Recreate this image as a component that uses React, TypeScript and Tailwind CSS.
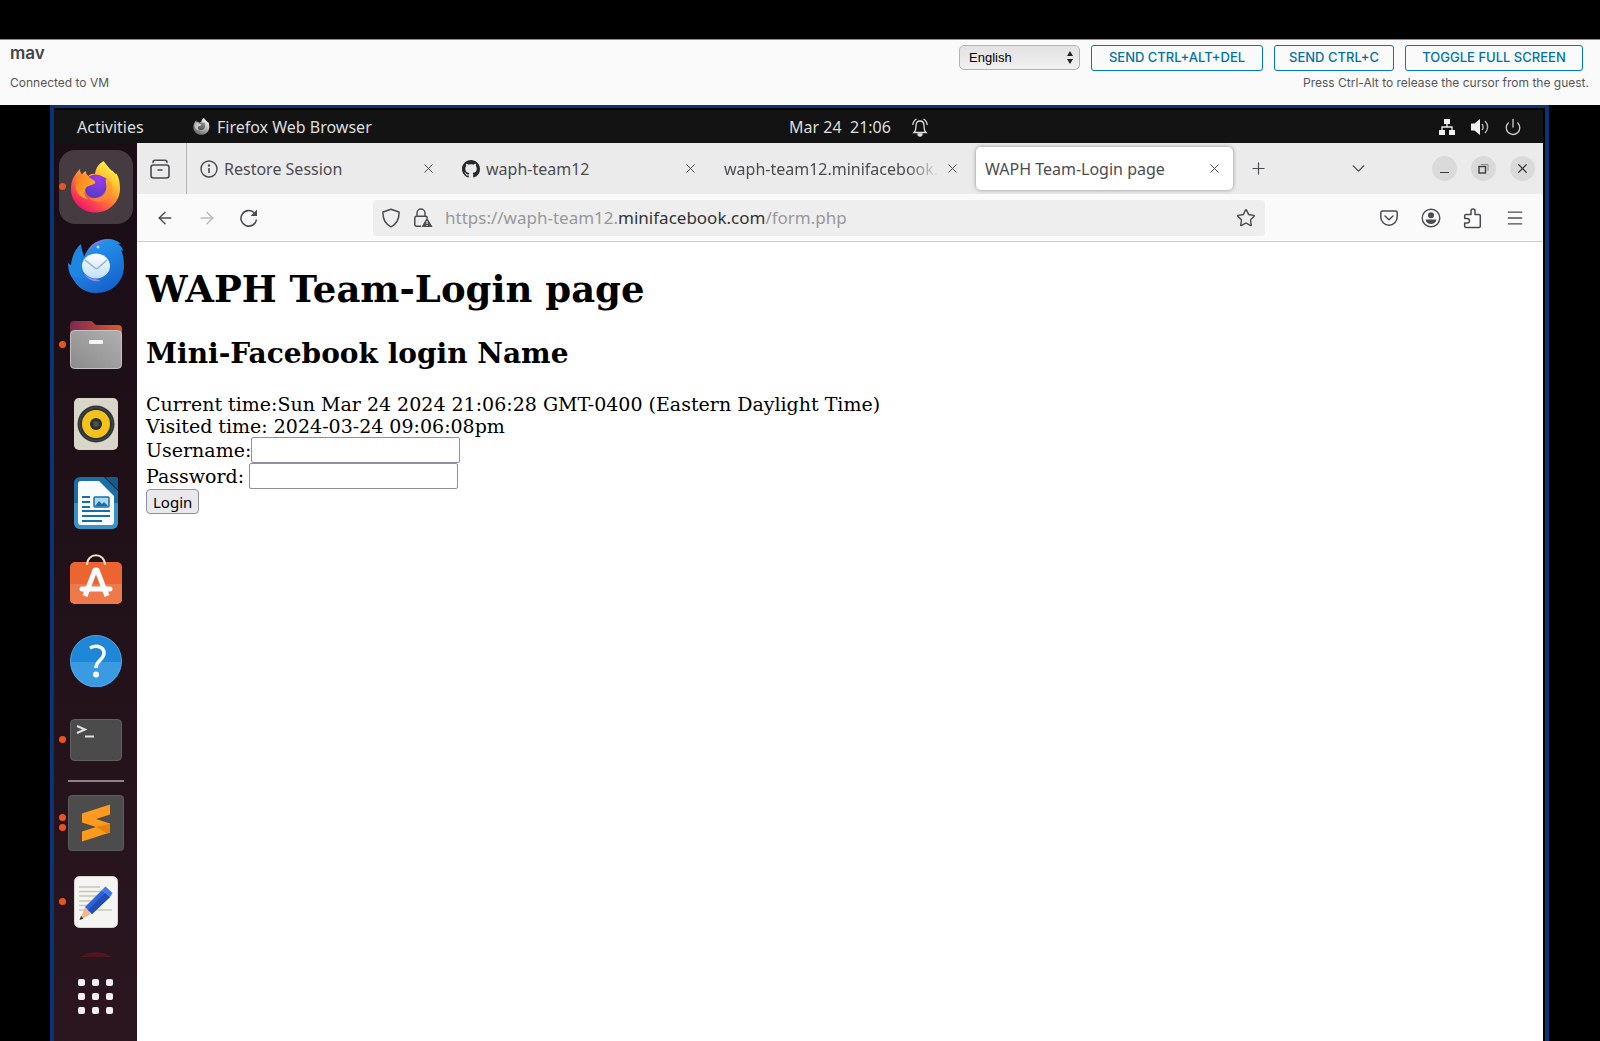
import React from "react";
import {
  ArrowLeft,
  ArrowRight,
  ChevronDown,
  Menu,
  Plus,
  Power,
  Star,
  X,
} from "lucide-react";

const ui = "font-['Noto_Sans','Open_Sans',sans-serif]";

function FirefoxLogo({ className = "", mono = false }: { className?: string; mono?: boolean }) {
  const id = mono ? "ffm" : "ffc";
  return (
    <svg viewBox="0 0 50 52" className={className} aria-hidden="true">
      <defs>
        <linearGradient id={`${id}-body`} x1="0.85" y1="0.1" x2="0.25" y2="0.95">
          <stop offset="0" stopColor={mono ? "#f2f2f2" : "#fff24a"} />
          <stop offset="0.3" stopColor={mono ? "#cfcfcf" : "#ffbd2e"} />
          <stop offset="0.6" stopColor={mono ? "#9a9a9a" : "#ff7139"} />
          <stop offset="1" stopColor={mono ? "#6b6b6b" : "#f5156c"} />
        </linearGradient>
        <radialGradient id={`${id}-globe`} cx="0.6" cy="0.2" r="0.9">
          <stop offset="0" stopColor={mono ? "#8a8a8a" : "#a03be8"} />
          <stop offset="1" stopColor={mono ? "#4b4b4b" : "#4b3bc4"} />
        </radialGradient>
        <linearGradient id={`${id}-fox`} x1="0" y1="0" x2="1" y2="0.6">
          <stop offset="0" stopColor={mono ? "#b5b5b5" : "#ff7a1c"} />
          <stop offset="1" stopColor={mono ? "#d9d9d9" : "#ffb52b"} />
        </linearGradient>
      </defs>
      <path
        d="M9 8C4 13 0 19 0 28c0 13 11 23.500 24.500 23.500S49 41 49 27.500c0-6-1-11-3.500-15C44 14 43 10 40 9c-3-3-5-6-7.500-9C28 3 25 6 24 13c-3-.5-5 .5-6.500 2-2-1-2.500-3-2.500-5-2 1-3 2-4 3.500C9.500 12 9 10 9 8z"
        fill={`url(#${id}-body)`}
      />
      <path d="M14 23c1-7 7-11 14-9 4 1 5 3 8 3-2 1-1 3-1 5 2 11-4 15-11 15S13 32 14 23z" fill={`url(#${id}-globe)`} />
      <path
        d="M5 17c4-2 8-2 12-1 3 .6 5 3 7 4.500 1 2-2 3-5 4-3 1-5 2-5 5-2 4 1 8 4 9C7 37 2 28 5 17z"
        fill={`url(#${id}-fox)`}
      />
      <path d="M34 16c3 4 3 12-1 16-4 5-9 6-15 5 5 5 14 5 20 0 6-6 5-16-4-21z" fill={mono ? "#bdbdbd" : "#ff8f33"} opacity="0.6" />
    </svg>
  );
}

function ThunderbirdLogo() {
  return (
    <svg viewBox="0 0 56 54" className="h-[54px] w-[56px]" aria-hidden="true">
      <defs>
        <linearGradient id="tb-body" x1="0.2" y1="0" x2="0.7" y2="1">
          <stop offset="0" stopColor="#2a9bf0" />
          <stop offset="0.5" stopColor="#1f7fe0" />
          <stop offset="1" stopColor="#1560c8" />
        </linearGradient>
        <linearGradient id="tb-env" x1="0" y1="0" x2="0" y2="1">
          <stop offset="0" stopColor="#ffffff" />
          <stop offset="1" stopColor="#bfe0fb" />
        </linearGradient>
      </defs>
      <path d="M13 5c0 6 3 9 3 14v22L8 43C2 38 0 31 0 24l3 2C4 17 7 10 13 5z" fill="#1d86e2" />
      <path
        d="M20 11C25 4 32 0 39 0c6 0 11 2 14 5h-3c3 2 5 4 5 7l-2-1c2 4 3 9 3 16 0 16-12 27-28 27C15 54 6 46 3 34c4 4 7 5 10 4C11 28 15 18 20 11z"
        fill="url(#tb-body)"
      />
      <path d="M18 14C23 4 31 .500 40 .500c-3 .5-6 1.500-8 3.500-5 2-10 5-14 10z" fill="#7d78e6" />
      <ellipse cx="28" cy="27" rx="14" ry="12.500" fill="url(#tb-env)" />
      <path d="m17 21 10 8c1 .8 2 .8 3 0l9-8" fill="none" stroke="#8cb2dd" strokeWidth="1.500" />
      <path d="M16 35c5 5 10 4 17 7-5 1-13 0-17-7z" fill="#8f86ef" />
      <circle cx="30" cy="8" r="1.500" fill="#a8e4ff" />
    </svg>
  );
}

function FilesLogo() {
  return (
    <svg viewBox="0 0 52 48" className="h-[48px] w-[52px]" aria-hidden="true">
      <defs>
        <linearGradient id="fl-back">
          <stop offset="0" stopColor="#7b2a52" />
          <stop offset="1" stopColor="#e4572a" />
        </linearGradient>
        <linearGradient id="fl-front" x1="0" y1="1" x2="1" y2="0">
          <stop offset="0" stopColor="#8b8b8b" />
          <stop offset="1" stopColor="#b0b0b0" />
        </linearGradient>
      </defs>
      <path d="M4 0h17c2 0 3 4 6 4h21a4 4 0 0 1 4 4v14H0V4a4 4 0 0 1 4-4z" fill="url(#fl-back)" />
      <rect x="0.500" y="9.500" width="51" height="38" rx="4" fill="url(#fl-front)" stroke="#c2c2c2" />
      <rect x="19" y="19" width="14" height="4" rx="1" fill="#f4f4f4" />
    </svg>
  );
}

function RhythmboxLogo() {
  return (
    <svg viewBox="0 0 44 52" className="h-[52px] w-[44px]" aria-hidden="true">
      <rect width="44" height="52" rx="5" fill="#d9d5c9" />
      <circle cx="22" cy="26" r="18.500" fill="#2e3436" />
      <circle cx="22" cy="26" r="16.500" fill="none" stroke="#454b4d" />
      <circle cx="22" cy="26" r="14" fill="#f5c21d" />
      <circle cx="22" cy="26" r="6" fill="#2a2f31" />
      <circle cx="22" cy="26" r="3" fill="#4a5052" />
    </svg>
  );
}

function WriterLogo() {
  return (
    <svg viewBox="0 0 44 52" className="h-[52px] w-[44px]" aria-hidden="true">
      <path d="M6 0h24l14 14v32a6 6 0 0 1-6 6H6a6 6 0 0 1-6-6V6a6 6 0 0 1 6-6z" fill="#1c6da5" />
      <path d="M0 26h44v20a6 6 0 0 1-6 6H6a6 6 0 0 1-6-6z" fill="#3a92c5" />
      <path d="M31 0h11a2 2 0 0 1 2 2v11z" fill="#145a8c" />
      <path d="M7 4h18l15 15v26a3 3 0 0 1-3 3H7a3 3 0 0 1-3-3V7a3 3 0 0 1 3-3z" fill="#f8fbfd" />
      <path d="M8 20h8M8 25h8M8 30h8M8 34h28M8 39h28M8 44h20" stroke="#1c6da5" strokeWidth="2" />
      <rect x="20" y="20" width="15" height="10" rx="1" fill="#a9dcf5" stroke="#1c6da5" strokeWidth="1.500" />
      <path d="m21 29 4-5 3 3 2-2 4 4z" fill="#1c6da5" />
    </svg>
  );
}

function SoftwareLogo() {
  return (
    <svg viewBox="0 0 52 56" className="h-[56px] w-[52px]" aria-hidden="true">
      <rect y="8" width="52" height="42" rx="5" fill="#ec6430" />
      <path d="M0 30h52v15a5 5 0 0 1-5 5H5a5 5 0 0 1-5-5z" fill="#ee7a4b" />
      <path d="M17 11c0-13 18-13 18 0" fill="none" stroke="#f1d9c6" strokeWidth="2" />
      <path d="m15 42 10-26h2l10 26" fill="none" stroke="#fff" strokeWidth="5" strokeLinejoin="round" />
      <path d="M12 35h28" stroke="#fff" strokeWidth="5" strokeLinecap="round" />
    </svg>
  );
}

function HelpLogo() {
  return (
    <svg viewBox="0 0 52 52" className="h-[52px] w-[52px]" aria-hidden="true">
      <circle cx="26" cy="26" r="25.500" fill="#1f87d8" />
      <path d="M.500 27a25.500 25.500 0 0 0 51 0z" fill="#3a9be2" />
      <circle cx="26" cy="26" r="25.500" fill="none" stroke="#4fa6e2" />
      <path d="M20 13c8-4 14 0 14 5 0 7-8 7-8 15" fill="none" stroke="#fff" strokeWidth="3.500" />
      <circle cx="26" cy="39.500" r="3" fill="#fff" />
    </svg>
  );
}

function TerminalLogo() {
  return (
    <svg viewBox="0 0 52 42" className="h-[42px] w-[52px]" aria-hidden="true">
      <rect x="0.500" y="0.500" width="51" height="41" rx="4" fill="#4b4b4b" stroke="#606060" />
      <path d="m7 7 8 3.500L7 14" fill="none" stroke="#e2e2e2" strokeWidth="2" />
      <path d="M15 17.500h9" stroke="#e2e2e2" strokeWidth="2" />
    </svg>
  );
}

function SublimeLogo() {
  return (
    <svg viewBox="0 0 56 56" className="h-[56px] w-[56px]" aria-hidden="true">
      <rect x="0.500" y="0.500" width="55" height="55" rx="3" fill="#4b4c4b" stroke="#5a5b5a" />
      <path d="M14 18.500 42 9.500v10L28 24l14 4.500v9L14 46.500v-10L28 32l-14-4.500z" fill="#ff9a1f" />
      <path d="m28 32 14-3.500v9L39 38.500z" fill="#e6830c" />
    </svg>
  );
}

function EditorLogo() {
  return (
    <svg viewBox="0 0 44 52" className="h-[52px] w-[44px]" aria-hidden="true">
      <rect x="0.500" y="0.500" width="43" height="51" rx="5" fill="#f4f4f3" stroke="#d6d6d6" />
      <path d="M5 11h21M5 15.500h23M5 20h19M5 25h15M5 29.500h12M5 34h33" stroke="#c9c6b8" strokeWidth="1.500" />
      <path d="m11 31-5 13 11-6z" fill="#f0b98a" />
      <path d="m5.500 44 1.500-4 2.500 2.500z" fill="#333" />
      <path d="m11 31 17-17 8 7-18 17z" fill="#2f63d6" />
      <path d="m14 34 17-17 5 4-18 17z" fill="#1f4cb8" />
      <path d="m28 14 3.500-3.500 7 6.500-2.500 4z" fill="#3f78ee" />
    </svg>
  );
}

function DockItem({ label, dots = 0, active = false, children }: { label: string; dots?: number; active?: boolean; children: React.ReactNode }) {
  return (
    <button type="button" aria-label={label} className="relative flex h-[79px] w-full shrink-0 items-center justify-center">
      <span className={active ? "flex size-[74px] items-center justify-center rounded-2xl bg-[#463b41]" : "flex items-center justify-center"}>{children}</span>
      <span className="absolute inset-y-0 left-[5px] flex flex-col items-center justify-center gap-[3px]">
        {Array.from({ length: dots }, (_, i) => (
          <span key={i} className="size-[7px] rounded-full bg-[#e95420]" />
        ))}
      </span>
    </button>
  );
}

function Dock() {
  return (
    <nav aria-label="Dock" className="flex w-[83px] shrink-0 flex-col bg-linear-to-b from-[#1a0d15] via-[#211119] to-[#2b1620] pt-[4px]">
      <DockItem label="Firefox" dots={1} active>
        <FirefoxLogo className="h-[52px] w-[50px]" />
      </DockItem>
      <DockItem label="Thunderbird"><ThunderbirdLogo /></DockItem>
      <DockItem label="Files" dots={1}><FilesLogo /></DockItem>
      <DockItem label="Rhythmbox"><RhythmboxLogo /></DockItem>
      <DockItem label="Writer"><WriterLogo /></DockItem>
      <DockItem label="Software"><SoftwareLogo /></DockItem>
      <DockItem label="Help"><HelpLogo /></DockItem>
      <DockItem label="Terminal" dots={1}><TerminalLogo /></DockItem>
      <div className="mx-auto my-px h-0.5 w-[56px] shrink-0 bg-[#8c8287]" />
      <DockItem label="Sublime Text" dots={2}><SublimeLogo /></DockItem>
      <DockItem label="Text Editor" dots={1}><EditorLogo /></DockItem>
      <div className="flex h-4 shrink-0 items-end justify-center">
        <svg viewBox="0 0 32 5" className="h-[5px] w-8" aria-hidden="true">
          <path d="M0 5C9-1.500 23-1.500 32 5z" fill="#53161f" />
        </svg>
      </div>
      <button type="button" aria-label="Show Applications" className="mt-[22px] grid shrink-0 grid-cols-3 gap-[7px] self-center">
        {Array.from({ length: 9 }, (_, i) => (
          <span key={i} className="size-[7px] rounded-xs bg-[#f3eff1]" />
        ))}
      </button>
    </nav>
  );
}

function ConsoleButton({ width, children }: { width: string; children: React.ReactNode }) {
  return (
    <button type="button" className={`h-[26px] rounded-[3px] border border-[#0079b8] text-[13px] font-medium whitespace-nowrap text-[#0072a3] ${width}`}>
      {children}
    </button>
  );
}

function ConsoleHeader() {
  return (
    <header className="flex h-[66px] shrink-0 justify-between border-t border-[#8a8a8a] bg-[#fafafa] pr-[11px] pl-[10px] font-['Inter',sans-serif] text-[#565656]">
      <div>
        <h1 className="pt-[1px] text-[17px] leading-6 font-semibold text-[#454545]">mav</h1>
        <p className="pt-[10px] text-[12px] leading-4">Connected to VM</p>
      </div>
      <div className="flex flex-col items-end pt-[5px]">
        <div className="flex gap-[11px] pr-[6px]">
          <div className="relative w-[121px]">
            <select aria-label="Keyboard language" defaultValue="English" className="block h-[25px] w-full appearance-none rounded-[5px] border border-[#b4b4b4] bg-linear-to-b from-[#e2e2e2] to-[#f1f1f1] px-[9px] font-['Liberation_Sans',sans-serif] text-[13px] text-black">
              <option>English</option>
            </select>
            <svg viewBox="0 0 8 13" className="pointer-events-none absolute top-[6px] right-[6px] h-[13px] w-2" aria-hidden="true">
              <path d="m4 0 3 5H1zM4 13 1 8h6z" fill="#222" />
            </svg>
          </div>
          <ConsoleButton width="w-[172px]">SEND CTRL+ALT+DEL</ConsoleButton>
          <ConsoleButton width="w-[120px]">SEND CTRL+C</ConsoleButton>
          <ConsoleButton width="w-[178px]">TOGGLE FULL SCREEN</ConsoleButton>
        </div>
        <p className="pt-[4px] text-[12px] leading-4">Press Ctrl-Alt to release the cursor from the guest.</p>
      </div>
    </header>
  );
}

function SystemBar() {
  return (
    <div className={`grid h-[33px] shrink-0 grid-cols-[1fr_auto_1fr] items-center bg-[#131313] text-[16px] text-[#dedede] ${ui}`}>
      <div className="flex items-center pl-[23px]">
        <button type="button" className="w-[116px] text-left">Activities</button>
        <button type="button" className="flex items-center gap-[7px]">
          <FirefoxLogo mono className="h-[17px] w-[17px]" />
          Firefox Web Browser
        </button>
      </div>
      <div className="flex items-center gap-5 pl-[121px]">
        <button type="button" className="whitespace-pre">Mar 24  21:06</button>
        <svg viewBox="0 0 18 20" className="h-5 w-[18px]" fill="none" stroke="#dedede" strokeWidth="1.300" aria-label="Notifications">
          <path d="M3 15.500h12c-1.500-1.500-2-3-2-7C13 5.500 11.500 4 9 4S5 5.500 5 8.500c0 4-.500 5.500-2 7zM5.500 2C3 3.500 2 5 1.800 8M12.500 2C15 3.500 16 5 16.200 8" />
          <path d="M7 17h4a2 2 0 0 1-4 0z" fill="#dedede" />
        </svg>
      </div>
      <div className="flex items-center justify-end gap-[15px] pr-[21px]">
        <svg viewBox="0 0 18 18" className="size-[18px]" fill="#f2f2f2" aria-label="Wired network">
          <path d="M6 1h6v5H6zM1 12h6v5H1zM11 12h6v5h-6z" />
          <path d="M9 6v3M4 12V9h10v3" fill="none" stroke="#f2f2f2" strokeWidth="1.300" />
        </svg>
        <svg viewBox="0 0 18 18" className="size-[18px]" fill="#f2f2f2" aria-label="Volume">
          <path d="M0 5.500h3.500L9 1v16l-5.500-4.500H0z" />
          <path d="M11 6c1.500 1.500 1.500 4.500 0 6M14 3c3.500 3.500 3.500 8.500 0 12" fill="none" stroke="#b5b5b5" strokeWidth="1.400" />
        </svg>
        <Power className="size-[18px] text-[#c8c8c8]" strokeWidth={1.8} />
      </div>
    </div>
  );
}

function GithubMark() {
  return (
    <svg viewBox="0 0 16 16" className="size-[18px] shrink-0" fill="#24292e" aria-hidden="true">
      <path d="M8 0C3.580 0 0 3.580 0 8c0 3.540 2.290 6.530 5.470 7.590.4.070.550-.170.550-.380 0-.190-.010-.820-.010-1.490-2.010.370-2.530-.490-2.690-.940-.090-.230-.480-.940-.820-1.130-.280-.150-.680-.520-.010-.530.630-.010 1.080.580 1.230.820.720 1.210 1.870.870 2.330.660.070-.520.280-.870.510-1.070-1.780-.2-3.640-.890-3.640-3.950 0-.870.310-1.590.820-2.150-.080-.2-.360-1.020.080-2.120 0 0 .670-.210 2.200.820.640-.180 1.320-.270 2-.270s1.360.090 2 .270c1.530-1.040 2.200-.820 2.200-.820.440 1.100.160 1.920.080 2.120.510.560.820 1.270.820 2.150 0 3.070-1.870 3.750-3.650 3.950.290.250.540.730.540 1.480 0 1.070-.010 1.930-.010 2.200 0 .210.150.460.550.380A8.010 8.010 0 0 0 16 8c0-4.420-3.580-8-8-8z" />
    </svg>
  );
}

function InfoIcon() {
  return (
    <svg viewBox="0 0 18 18" className="size-[18px] shrink-0" fill="none" stroke="#4c4c50" strokeWidth="1.400" aria-hidden="true">
      <circle cx="9" cy="9" r="8" />
      <path d="M9 8v5" strokeWidth="1.600" />
      <circle cx="9" cy="5.500" r="0.500" />
    </svg>
  );
}

function Tab({ icon, title, active = false, fade = false }: { icon?: React.ReactNode; title: string; active?: boolean; fade?: boolean }) {
  return (
    <div
      className={
        active
          ? "my-1 flex w-[257px] shrink items-center gap-[6px] rounded-[5px] bg-white pr-[11px] pl-[9px] shadow-[0_0_4px_rgba(0,0,0,0.4)]"
          : "flex w-[262px] shrink items-center gap-[6px] pr-[16px] pl-[10px]"
      }
    >
      {icon}
      <button
        type="button"
        className={fade ? "min-w-0 flex-1 overflow-hidden mask-r-from-85% mask-r-to-100% text-left whitespace-nowrap" : "min-w-0 flex-1 overflow-hidden text-left whitespace-nowrap"}
      >
        {title}
      </button>
      <button type="button" aria-label={`Close ${title}`}>
        <X className="size-[15px]" strokeWidth={1.6} />
      </button>
    </div>
  );
}

function TabStrip() {
  return (
    <div className="flex h-[51px] shrink-0 bg-[#ebebeb] text-[#4c4c50]">
      <button type="button" aria-label="Recent browsing" className="flex w-[50px] shrink-0 items-center justify-center border-r border-[#b5b5b5] pr-1">
        <svg viewBox="0 0 20 20" className="size-5" fill="none" stroke="#4c4c50" strokeWidth="1.600" strokeLinecap="round" aria-hidden="true">
          <rect x="1" y="6" width="18" height="13" rx="2.500" />
          <path d="M3 3.500C3 2 4 1.300 5 1.300h10c1 0 2 .7 2 2.200M8 11h4" />
        </svg>
      </button>
      <div className="flex min-w-0 pl-[3px]">
        <Tab icon={<InfoIcon />} title="Restore Session" />
        <Tab icon={<GithubMark />} title="waph-team12" />
        <Tab title="waph-team12.minifacebook.com" fade />
        <Tab title="WAPH Team-Login page" active />
      </div>
      <button type="button" aria-label="New tab" className="ml-[12px] self-center p-1"><Plus className="size-[19px]" strokeWidth={1.5} /></button>
      <button type="button" aria-label="List all tabs" className="ml-auto self-center"><ChevronDown className="size-[21px]" strokeWidth={1.6} /></button>
      <div className="ml-[63px] flex items-center gap-[14px] pr-[8px]">
        <button type="button" aria-label="Minimize" className="flex size-[25px] items-center justify-center rounded-full bg-[#dadada]">
          <span className="mt-[7px] h-px w-[9px] bg-[#3c3c3c]" />
        </button>
        <button type="button" aria-label="Restore" className="flex size-[25px] items-center justify-center rounded-full bg-[#dadada]">
          <svg viewBox="0 0 11 11" className="size-[11px]" fill="none" stroke="#3c3c3c" aria-hidden="true">
            <rect x="1" y="3.500" width="6.500" height="6.500" strokeWidth="1.400" />
            <path d="M3 1.500h7V8" stroke="#8d8d8d" />
          </svg>
        </button>
        <button type="button" aria-label="Close window" className="flex size-[25px] items-center justify-center rounded-full bg-[#dadada]">
          <X className="size-[15px] text-[#3c3c3c]" strokeWidth={2} />
        </button>
      </div>
    </div>
  );
}

function AddressBar() {
  return (
    <div className="flex h-[48px] shrink-0 items-center border-b border-[#cccccc] bg-[#fafafa] text-[#4c4c50]">
      <div className="flex w-[236px] shrink-0 items-center gap-[22px] pl-[18px]">
        <button type="button" aria-label="Back"><ArrowLeft className="size-5" strokeWidth={1.6} /></button>
        <button type="button" aria-label="Forward" className="text-[#b9b9bb]"><ArrowRight className="size-5" strokeWidth={1.6} /></button>
        <button type="button" aria-label="Reload">
          <svg viewBox="0 0 20 20" className="size-5" fill="none" stroke="currentColor" strokeWidth="1.600" aria-hidden="true">
            <path d="M17.500 11.500A7.800 7.800 0 1 1 15 4.500" />
            <path d="M18 1.500v6.500h-6.500z" fill="currentColor" stroke="none" />
          </svg>
        </button>
      </div>
      <div className="flex h-9 min-w-0 flex-1 items-center rounded bg-[#eeeeee] px-[9px]">
        <svg viewBox="0 0 18 20" className="h-5 w-[18px] shrink-0" fill="none" stroke="currentColor" strokeWidth="1.500" strokeLinejoin="round" aria-label="Tracking protection">
          <path d="M9 1.200 17 4c.3 6-1.500 11.500-8 14.800C2.500 15.500.7 10 1 4z" />
        </svg>
        <svg viewBox="0 0 20 20" className="ml-[13px] size-5 shrink-0" fill="none" stroke="currentColor" strokeWidth="1.500" aria-label="Connection not secure">
          <path d="M8 18.200H3.500A1.700 1.700 0 0 1 1.800 16.500V10c0-1 .7-1.700 1.700-1.700h9c1 0 1.700.7 1.700 1.700M4 8.300V5a4 4 0 0 1 8 0v3.300" />
          <path d="M14 9.500 19.500 19h-11z" fill="currentColor" stroke="none" />
          <path d="M14 13v3M14 17v1" stroke="#eee" strokeWidth="1.200" />
        </svg>
        <a href="#form" className="ml-[12px] min-w-0 flex-1 truncate text-[17px] text-[#98989b]">
          https://waph-team12.<span className="text-[#333336]">minifacebook.com</span>/form.php
        </a>
        <button type="button" aria-label="Bookmark this page"><Star className="size-5" strokeWidth={1.7} /></button>
      </div>
      <div className="flex w-[278px] shrink-0 items-center justify-end gap-[22px] pr-[18px]">
        <svg viewBox="0 0 20 20" className="size-5" fill="none" stroke="currentColor" strokeWidth="1.500" strokeLinecap="round" strokeLinejoin="round" aria-label="Save to Pocket">
          <path d="M3.500 3h13c1 0 1.700.7 1.700 1.700V9a8.200 8.200 0 0 1-16.400 0V4.700C1.800 3.700 2.500 3 3.500 3zM6 8l4 3.800L14 8" />
        </svg>
        <svg viewBox="0 0 20 20" className="size-5" fill="none" aria-label="Account">
          <circle cx="10" cy="10" r="8.800" stroke="currentColor" strokeWidth="1.400" />
          <circle cx="10" cy="7.200" r="3" fill="currentColor" />
          <path d="M4.500 11.500h11c-.500 3-3 4.500-5.500 4.500s-5-1.500-5.500-4.500z" fill="currentColor" />
        </svg>
        <svg viewBox="0 0 20 22" className="h-[22px] w-5" fill="none" stroke="currentColor" strokeWidth="1.500" strokeLinejoin="round" aria-label="Extensions">
          <path d="M3 7.500h5V4a2 2 0 0 1 4 0v3.500h4c.8 0 1.300.5 1.300 1.300v10.400c0 .8-.5 1.300-1.300 1.300H3c-.8 0-1.300-.5-1.300-1.300V16h2.500a2 2 0 0 0 0-4.500H1.700V8.800c0-.8.5-1.300 1.300-1.300z" />
        </svg>
        <button type="button" aria-label="Open menu"><Menu className="size-5" strokeWidth={1.6} /></button>
      </div>
    </div>
  );
}

function LoginPage() {
  return (
    <main id="form" className="min-h-0 flex-1 bg-white pl-[9px] font-['DejaVu_Serif',serif] text-[19px] leading-[22px] text-black">
      <h1 className="pt-[24px] text-[37px] leading-[46px] font-bold">WAPH Team-Login page</h1>
      <h2 className="pt-[25px] text-[28px] leading-[34px] font-bold">Mini-Facebook login Name</h2>
      <div className="pt-[22px]">Current time:Sun Mar 24 2024 21:06:28 GMT-0400 (Eastern Daylight Time)</div>
      <div>Visited time: 2024-03-24 09:06:08pm</div>
      <form onSubmit={(e) => e.preventDefault()}>
        <div className="flex h-[26px] items-center">
          <label htmlFor="username">Username:</label>
          <input id="username" type="text" className="h-[26px] w-[209px] rounded-xs border border-[#8f8f9d] bg-white px-1" />
        </div>
        <div className="flex h-[26px] items-center gap-[5px]">
          <label htmlFor="password">Password:</label>
          <input id="password" type="password" className="h-[26px] w-[209px] rounded-xs border border-[#8f8f9d] bg-white px-1" />
        </div>
        <button type="submit" className={`flex h-[25px] items-center rounded border border-[#8f8f9d] bg-[#e9e9ed] px-[6px] text-[15px] ${ui}`}>
          Login
        </button>
      </form>
    </main>
  );
}

export default function App() {
  return (
    <div className="flex min-h-screen flex-col bg-black pt-[39px]">
      <ConsoleHeader />
      <div className="mr-[51px] ml-[50px] flex flex-1 flex-col border-x-4 border-t-3 border-[#0a3474] bg-black pt-[2px] pr-[2px]">
        <SystemBar />
        <div className="flex min-h-0 flex-1">
          <Dock />
          <div className={`flex min-w-0 flex-1 flex-col text-[16px] ${ui}`}>
            <TabStrip />
            <AddressBar />
            <LoginPage />
          </div>
        </div>
      </div>
    </div>
  );
}
